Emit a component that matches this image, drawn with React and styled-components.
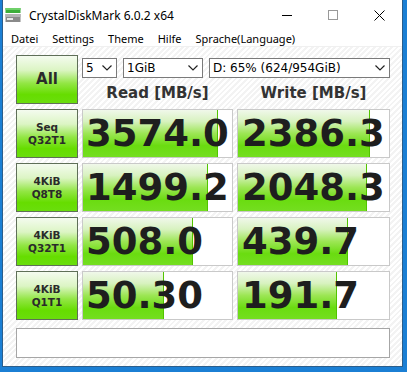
import React from "react";
import styled, { createGlobalStyle } from "styled-components";

const GlobalStyle = createGlobalStyle`
  html, body {
    margin: 0;
    padding: 0;
    background: #1b7fd4;
  }
  #root {
    width: 407px;
    height: 372px;
    overflow: hidden;
  }
`;

const rows = [
  { top: "Seq", bottom: "Q32T1", read: "3574.0", readBar: 90, write: "2386.3", writeBar: 87 },
  { top: "4KiB", bottom: "Q8T8", read: "1499.2", readBar: 83, write: "2048.3", writeBar: 85 },
  { top: "4KiB", bottom: "Q32T1", read: "508.0", readBar: 73, write: "439.7", writeBar: 72 },
  { top: "4KiB", bottom: "Q1T1", read: "50.30", readBar: 54, write: "191.7", writeBar: 65 },
];

const menu = ["Datei", "Settings", "Theme", "Hilfe", "Sprache(Language)"];

const Desktop = styled.div`
  display: flex;
  height: 372px;
  padding-left: 2px;
  box-sizing: border-box;
`;

const Window = styled.div`
  width: 401px;
  height: 367px;
  box-sizing: border-box;
  border: 1px solid #2b5e8c;
  border-top: none;
  background: #fff;
  display: flex;
  flex-direction: column;
`;

const TitleBar = styled.div`
  height: 30px;
  display: flex;
  align-items: center;
  font-family: "Noto Sans", "Open Sans", sans-serif;
  font-size: 12px;
  color: #000;
`;

const AppIcon = styled.div`
  width: 16px;
  height: 16px;
  margin-left: 2px;
  margin-right: 8px;
  display: flex;
`;

const Title = styled.div`
  flex: 1;
`;

const Caption = styled.div`
  width: 46px;
  height: 30px;
  display: flex;
  align-items: center;
  justify-content: center;
`;

const MenuBar = styled.div`
  height: 16px;
  display: flex;
  align-items: center;
  padding-left: 1px;
  border-bottom: 1px solid #f0f0f0;
  font-family: "Noto Sans", "Open Sans", sans-serif;
  font-size: 11px;
  color: #000;
`;

const MenuItem = styled.div`
  padding: 0 7px;
`;

const Content = styled.div`
  flex: 1;
  padding: 8px 0 0 13px;
  background: repeating-linear-gradient(
    135deg,
    #ffffff 0px,
    #ffffff 2px,
    #f3f3f3 2px,
    #f3f3f3 4px
  );
`;

const Grid = styled.div`
  display: grid;
  grid-template-columns: 62px 151px 153px;
  grid-auto-rows: 49px;
  column-gap: 4px;
  row-gap: 5px;
`;

const GreenButton = styled.div`
  box-sizing: border-box;
  border: 1px solid #5f6f58;
  background: linear-gradient(
    to bottom,
    #f4fbef 0%,
    #dcf5c4 30%,
    #92e644 58%,
    #66dd00 82%,
    #6ade0c 100%
  );
  display: flex;
  flex-direction: column;
  align-items: center;
  justify-content: center;
  font-family: "DejaVu Sans", Verdana, sans-serif;
  font-weight: bold;
  color: #2a2a2a;
  font-size: ${(p) => (p.$big ? "15px" : "10.5px")};
  line-height: 13px;
`;

const TopRight = styled.div`
  grid-column: 2 / 4;
  display: flex;
  flex-direction: column;
`;

const Selects = styled.div`
  margin-top: 3px;
  display: flex;
  gap: 6px;
  height: 20px;
`;

const Combo = styled.div`
  width: ${(p) => p.$w}px;
  box-sizing: border-box;
  border: 1px solid #7a7a7a;
  background: #fff;
  display: flex;
  align-items: center;
  justify-content: space-between;
  padding: 0 4px 0 3px;
  font-family: "DejaVu Sans", Verdana, sans-serif;
  font-size: 12px;
  color: #000;
`;

const Headers = styled.div`
  flex: 1;
  display: grid;
  grid-template-columns: 151px 153px;
  column-gap: 4px;
`;

const Header = styled.div`
  display: flex;
  align-items: center;
  justify-content: center;
  font-family: "DejaVu Sans", Verdana, sans-serif;
  font-weight: bold;
  font-size: 15px;
  color: #333;
  padding-top: 3px;
`;

const ValueBox = styled.div`
  position: relative;
  box-sizing: border-box;
  border: 1px solid #c9c9c9;
  background: #fff;
  overflow: hidden;
  display: flex;
  align-items: center;
`;

const Bar = styled.div`
  position: absolute;
  left: 0;
  top: 0;
  bottom: 0;
  border-right: 1px solid #52c400;
  background: linear-gradient(
    to bottom,
    #f0f8ea 0%,
    #d8f2c0 24%,
    #9ce654 50%,
    #6adc10 76%,
    #74de20 100%
  );
`;

const Value = styled.div`
  position: relative;
  padding-left: ${(p) => p.$pad}px;
  font-family: "DejaVu Sans", Verdana, sans-serif;
  font-weight: bold;
  font-size: 37px;
  color: #1e1e1e;
  white-space: nowrap;
  line-height: 1;
`;

const StatusBar = styled.div`
  margin-top: 8px;
  width: 374px;
  height: 30px;
  box-sizing: border-box;
  border: 1px solid #a6a6a6;
  background: #fff;
`;

const Chevron = () => (
  <svg width="10" height="6" viewBox="0 0 10 6">
    <path d="M0.5 0.5 L5 5 L9.5 0.5" fill="none" stroke="#222" strokeWidth="1.2" />
  </svg>
);

const DiskIcon = () => (
  <svg width="16" height="16" viewBox="0 0 16 16">
    <rect x="0.5" y="1" width="15" height="5" fill="#3dae3a" />
    <rect x="0.5" y="1" width="15" height="2" fill="#6fd06a" />
    <rect x="0.5" y="7" width="15" height="8" fill="#8a8a8a" />
    <rect x="0.5" y="7" width="15" height="3" fill="#b4b4b4" />
    <rect x="2" y="11" width="6" height="2" fill="#e8e8e8" />
  </svg>
);

const Cell = ({ text, bar, pad }) => (
  <ValueBox>
    <Bar style={{ width: `${bar}%` }} />
    <Value $pad={pad}>{text}</Value>
  </ValueBox>
);

export default function App() {
  return (
    <>
      <GlobalStyle />
      <Desktop>
        <Window>
          <TitleBar>
            <AppIcon>
              <DiskIcon />
            </AppIcon>
            <Title>CrystalDiskMark 6.0.2 x64</Title>
            <Caption>
              <svg width="10" height="1" viewBox="0 0 10 1">
                <rect width="10" height="1" fill="#000" />
              </svg>
            </Caption>
            <Caption>
              <svg width="10" height="10" viewBox="0 0 10 10">
                <rect x="0.5" y="0.5" width="9" height="9" fill="none" stroke="#999" />
              </svg>
            </Caption>
            <Caption>
              <svg width="11" height="11" viewBox="0 0 11 11">
                <path d="M0.5 0.5 L10.5 10.5 M10.5 0.5 L0.5 10.5" stroke="#000" strokeWidth="1" />
              </svg>
            </Caption>
          </TitleBar>
          <MenuBar>
            {menu.map((m) => (
              <MenuItem key={m}>{m}</MenuItem>
            ))}
          </MenuBar>
          <Content>
            <Grid>
              <GreenButton $big>All</GreenButton>
              <TopRight>
                <Selects>
                  <Combo $w={35}>
                    <span>5</span>
                    <Chevron />
                  </Combo>
                  <Combo $w={80}>
                    <span>1GiB</span>
                    <Chevron />
                  </Combo>
                  <Combo $w={181}>
                    <span>D: 65% (624/954GiB)</span>
                    <Chevron />
                  </Combo>
                </Selects>
                <Headers>
                  <Header>Read [MB/s]</Header>
                  <Header>Write [MB/s]</Header>
                </Headers>
              </TopRight>
              {rows.map((r, i) => (
                <React.Fragment key={i}>
                  <GreenButton>
                    <span>{r.top}</span>
                    <span>{r.bottom}</span>
                  </GreenButton>
                  <Cell text={r.read} bar={r.readBar} pad={3} />
                  <Cell text={r.write} bar={r.writeBar} pad={4} />
                </React.Fragment>
              ))}
            </Grid>
            <StatusBar />
          </Content>
        </Window>
      </Desktop>
    </>
  );
}
